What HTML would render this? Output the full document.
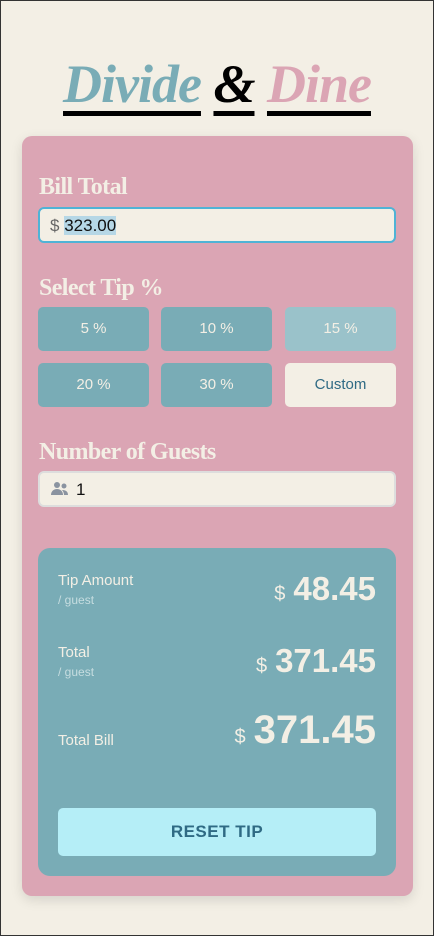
<!DOCTYPE html>
<html><head><meta charset="utf-8"><style>
*{box-sizing:border-box;margin:0;padding:0}
html,body{width:434px;height:936px;overflow:hidden}
body{background:#f3efe5;font-family:"Liberation Sans",sans-serif;position:relative;border:1px solid #333;}
.title{position:absolute;top:52px;left:0;width:432px;text-align:center;font-family:"Liberation Serif",serif;font-weight:bold;font-style:italic;font-size:54px;letter-spacing:-1px}
.title span{text-decoration:underline;text-decoration-thickness:5px;text-underline-offset:9px;text-decoration-color:#000}
.card{position:absolute;left:21px;top:135px;width:391px;height:760px;background:#dba5b4;border-radius:10px;box-shadow:0 4px 12px rgba(0,0,0,.12)}
.lbl{position:absolute;left:17px;font-family:"Liberation Serif",serif;font-weight:bold;font-size:24px;color:#f3efe5;letter-spacing:-0.6px}
.inp{position:absolute;left:16px;width:358px;background:#f3efe5;border-radius:6px;font-size:17px;color:#111}
.btn{position:absolute;width:111px;height:44px;background:#79acb6;border-radius:5px;color:#f3efe5;font-size:15px;text-align:center;line-height:44px}
.res{position:absolute;left:16px;top:412px;width:358px;height:328px;background:#79acb6;border-radius:12px;color:#f3efe5}
.rl{position:absolute;left:20px;font-size:15px}
.rs{font-size:12px;color:#c6dde0;display:block;margin-top:4px}
.rv{position:absolute;right:20px;font-weight:bold;text-align:right}
.rv small{font-weight:normal;font-size:20px;margin-right:8px}
</style></head><body>
<div class="title"><span style="color:#79acb6">Divide</span> <span style="color:#000">&amp;</span> <span style="color:#dba5b4">Dine</span></div>
<div class="card">
 <div class="lbl" style="top:38px">Bill Total</div>
 <div class="inp" style="top:71px;height:36px;border:2px solid #4fb3d6;padding:7px 10px"><span style="color:#666">$</span> <span style="background:#b6d7e6">323.00</span></div>
 <div class="lbl" style="top:139px">Select Tip %</div>
 <div class="btn" style="left:16px;top:171px">5 %</div>
 <div class="btn" style="left:139px;top:171px">10 %</div>
 <div class="btn" style="left:263px;top:171px;background:#9ac2ca">15 %</div>
 <div class="btn" style="left:16px;top:227px">20 %</div>
 <div class="btn" style="left:139px;top:227px">30 %</div>
 <div class="btn" style="left:263px;top:227px;background:#f3efe5;color:#2f6a84">Custom</div>
 <div class="lbl" style="top:303px">Number of Guests</div>
 <div class="inp" style="top:335px;height:36px;border:2px solid #ddd;padding:7px 10px">
  <svg width="20" height="16" viewBox="0 0 20 16" style="vertical-align:-2px;margin-right:6px"><circle cx="7" cy="4" r="3" fill="#8a93a0"/><circle cx="14" cy="5" r="2.5" fill="#8a93a0"/><path d="M1 14c0-4 3-6 6-6s6 2 6 6z" fill="#8a93a0"/><path d="M12 9c3 0 6 1 6 5h-4c0-2-1-4-2-5z" fill="#8a93a0"/></svg>1</div>
 <div class="res">
  <div class="rl" style="top:24px">Tip Amount<span class="rs">/ guest</span></div>
  <div class="rv" style="top:22px;font-size:33px"><small>$</small>48.45</div>
  <div class="rl" style="top:96px">Total<span class="rs">/ guest</span></div>
  <div class="rv" style="top:94px;font-size:33px"><small>$</small>371.45</div>
  <div class="rl" style="top:184px">Total Bill</div>
  <div class="rv" style="top:160px;font-size:40px"><small>$</small>371.45</div>
  <div style="position:absolute;left:20px;top:260px;width:318px;height:48px;background:#b5eef7;border-radius:5px;color:#2f6a84;font-size:17px;font-weight:bold;text-align:center;line-height:48px;letter-spacing:.5px">RESET TIP</div>
 </div>
</div>
</body></html>
